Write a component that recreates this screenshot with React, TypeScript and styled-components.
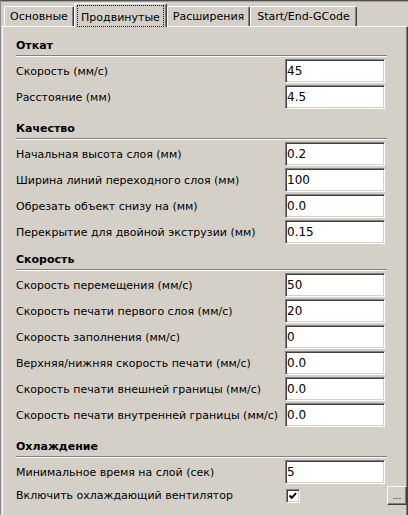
import React from 'react';
import styled, { createGlobalStyle } from 'styled-components';

const GlobalStyle = createGlobalStyle`
  html, body {
    margin: 0;
    padding: 0;
    background: #d4d0c8;
    overflow: hidden;
  }
  body {
    font-family: 'DejaVu Sans', 'Liberation Sans', sans-serif;
    font-size: 11px;
    color: #000000;
  }
`;

const Frame = styled.div`
  width: 408px;
  height: 515px;
  box-sizing: border-box;
  border-top: 1px solid #505050;
  border-left: 1px solid #8a8a8a;
  padding-left: 1px;
  box-shadow: inset 0 1px 0 #a0a0a0;
  display: flex;
  flex-direction: column;
  overflow: hidden;
`;

const TabStrip = styled.div`
  display: flex;
  align-items: flex-end;
  height: 24px;
  padding-top: 1px;
  padding-left: 2px;
  flex-shrink: 0;
`;

const Tab = styled.div<{ $w: number; $active?: boolean }>`
  position: relative;
  z-index: ${(p) => (p.$active ? 2 : 1)};
  box-sizing: border-box;
  width: ${(p) => p.$w}px;
  height: ${(p) => (p.$active ? 24 : 20)}px;
  margin-bottom: ${(p) => (p.$active ? -1 : 0)}px;
  background: #d4d0c8;
  border-top: 1px solid #ffffff;
  border-left: 1px solid #ffffff;
  border-right: 1px solid #404040;
  box-shadow: inset -1px 0 0 #808080;
  border-radius: 2px 2px 0 0;
  display: flex;
  padding: ${(p) => (p.$active ? '1px 2px 0 2px' : '0 2px')};
  white-space: nowrap;
`;

const TabLabel = styled.span<{ $focused?: boolean }>`
  flex: 1;
  display: flex;
  align-items: center;
  justify-content: center;
  border: 1px dotted ${(p) => (p.$focused ? '#000000' : 'transparent')};
  padding-top: ${(p) => (p.$focused ? 2 : 0)}px;
`;

const Panel = styled.div`
  flex: 1;
  box-sizing: border-box;
  width: 406px;
  background: #d4d0c8;
  border-top: 1px solid #ffffff;
  border-left: 1px solid #ffffff;
  border-right: 1px solid #404040;
  box-shadow: inset -1px 0 0 #808080;
  padding-left: 13px;
  padding-right: 0;
`;

const Section = styled.section<{ $mt: number }>`
  display: grid;
  grid-template-columns: 1fr 100px 22px;
  row-gap: 2px;
  margin-top: ${(p) => p.$mt}px;
`;

const Heading = styled.div`
  grid-column: 1 / -1;
  margin-right: 20px;
  margin-bottom: 1px;
  font-weight: bold;
  line-height: 14px;
  padding-bottom: 2px;
  border-bottom: 1px solid #808080;
  box-shadow: 0 1px 0 #ffffff;
`;

const Label = styled.div`
  grid-column: 1;
  display: flex;
  align-items: center;
  white-space: nowrap;
`;

const TextField = styled.input`
  grid-column: 2;
  box-sizing: border-box;
  width: 100px;
  height: 24px;
  margin: 0;
  padding: 0 2px 0 1px;
  font-family: inherit;
  font-size: 12px;
  color: #000000;
  background: #ffffff;
  border: 1px solid;
  border-color: #808080 #ffffff #ffffff #808080;
  box-shadow: inset 1px 1px 0 #404040, inset -1px -1px 0 #d4d0c8;
  outline: none;
`;

const CheckCell = styled.div`
  grid-column: 2;
  display: flex;
  align-items: center;
  padding-left: 1px;
`;

const CheckBox = styled.span`
  box-sizing: border-box;
  width: 14px;
  height: 14px;
  background: #ffffff;
  border: 1px solid;
  border-color: #808080 #ffffff #ffffff #808080;
  box-shadow: inset 1px 1px 0 #404040, inset -1px -1px 0 #d4d0c8;
  display: flex;
  align-items: center;
  justify-content: center;
`;

const MoreButton = styled.button`
  grid-column: 3;
  box-sizing: border-box;
  width: 20px;
  height: 19px;
  margin: 0 0 0 2px;
  padding: 0 0 3px 0;
  background: #d4d0c8;
  border: 1px solid;
  border-color: #ffffff #404040 #404040 #ffffff;
  box-shadow: inset -1px -1px 0 #808080;
  font-family: inherit;
  font-size: 9px;
  line-height: 1;
  color: #000000;
  display: flex;
  align-items: flex-end;
  justify-content: center;
`;

const Check = () => (
  <svg width="8" height="8" viewBox="0 0 8 8">
    <polyline points="0.5,3.5 2.8,5.8 7,1.2" fill="none" stroke="#000" strokeWidth="2" />
  </svg>
);

type Field = { label: string; value: string };

const sections: { title: string; mt: number; fields: Field[] }[] = [
  {
    title: 'Откат',
    mt: 12,
    fields: [
      { label: 'Скорость (мм/с)', value: '45' },
      { label: 'Расстояние (мм)', value: '4.5' },
    ],
  },
  {
    title: 'Качество',
    mt: 13,
    fields: [
      { label: 'Начальная высота слоя (мм)', value: '0.2' },
      { label: 'Ширина линий переходного слоя (мм)', value: '100' },
      { label: 'Обрезать объект снизу на (мм)', value: '0.0' },
      { label: 'Перекрытие для двойной экструзии (мм)', value: '0.15' },
    ],
  },
  {
    title: 'Скорость',
    mt: 9,
    fields: [
      { label: 'Скорость перемещения (мм/с)', value: '50' },
      { label: 'Скорость печати первого слоя (мм/с)', value: '20' },
      { label: 'Скорость заполнения (мм/с)', value: '0' },
      { label: 'Верхняя/нижняя скорость печати (мм/с)', value: '0.0' },
      { label: 'Скорость печати внешней границы (мм/с)', value: '0.0' },
      { label: 'Скорость печати внутренней границы (мм/с)', value: '0.0' },
    ],
  },
];

const tabs = [
  { name: 'Основные', w: 70 },
  { name: 'Продвинутые', w: 93, active: true },
  { name: 'Расширения', w: 83 },
  { name: 'Start/End-GCode', w: 107 },
];

export default function App() {
  return (
    <>
      <GlobalStyle />
      <Frame>
        <TabStrip>
          {tabs.map((t) => (
            <Tab key={t.name} $w={t.w} $active={t.active}>
              <TabLabel $focused={t.active}>{t.name}</TabLabel>
            </Tab>
          ))}
        </TabStrip>
        <Panel>
          {sections.map((s) => (
            <Section key={s.title} $mt={s.mt}>
              <Heading>{s.title}</Heading>
              {s.fields.map((f) => (
                <React.Fragment key={f.label}>
                  <Label>{f.label}</Label>
                  <TextField defaultValue={f.value} readOnly />
                </React.Fragment>
              ))}
            </Section>
          ))}
          <Section $mt={13}>
            <Heading>Охлаждение</Heading>
            <Label>Минимальное время на слой (сек)</Label>
            <TextField defaultValue="5" readOnly />
            <Label>Включить охлаждающий вентилятор</Label>
            <CheckCell>
              <CheckBox>
                <Check />
              </CheckBox>
            </CheckCell>
            <MoreButton>...</MoreButton>
          </Section>
        </Panel>
      </Frame>
    </>
  );
}
